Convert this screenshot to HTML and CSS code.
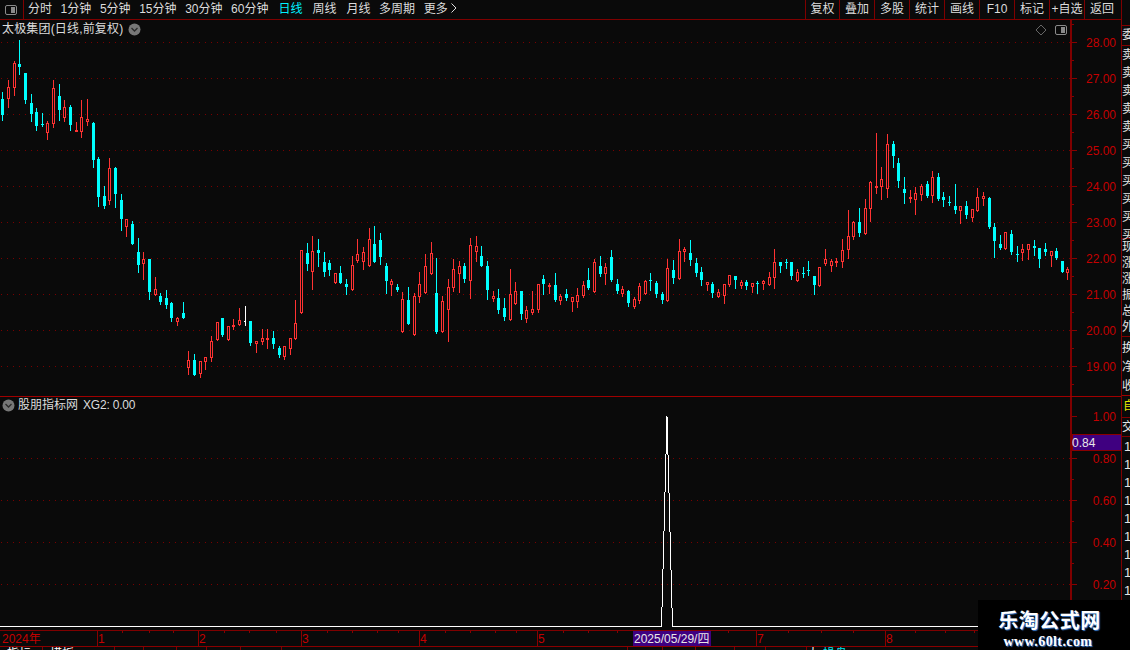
FILE: index.html
```html
<!DOCTYPE html>
<html lang="zh-CN">
<head>
<meta charset="utf-8">
<title>太极集团 日线</title>
<link rel="stylesheet" href="styles.css">
</head>
<body>
<div class="app">
  <div class="left">
    <header class="toolbar">
      <div class="tb-icon">
        <svg width="14" height="12" viewBox="0 0 14 12"><rect class="ic-box" x="1.5" y="1.5" width="11" height="9" rx="1.5"/><rect class="ic-fill" x="7" y="3" width="4" height="6"/></svg>
      </div>
      <nav class="periods">
        <span>分时</span><span>1分钟</span><span>5分钟</span><span>15分钟</span><span>30分钟</span><span>60分钟</span>
        <span class="wide active">日线</span><span class="wide">周线</span><span class="wide">月线</span><span>多周期</span><span>更多 <svg class="more" width="6" height="10" viewBox="0 0 6 10"><path d="M0.5 0.5L5 5L0.5 9.5"/></svg></span>
      </nav>
      <nav class="actions">
        <span>复权</span><span>叠加</span><span>多股</span><span>统计</span><span>画线</span><span>F10</span><span>标记</span><span>+自选</span><span>返回</span>
      </nav>
    </header>

    <section class="pane price">
      <div class="plot">
        <div class="title"><span class="name">太极集团(日线,前复权)</span>
          <svg class="chev" width="13" height="13" viewBox="0 0 13 13"><circle cx="6.5" cy="6.5" r="6"/><path d="M3.5 5L6.5 8L9.5 5"/></svg>
        </div>
        <div class="corner">
          <svg width="12" height="12" viewBox="0 0 12 12"><path class="ic-line" d="M6 1L11 6L6 11L1 6Z"/></svg>
          <svg width="14" height="12" viewBox="0 0 14 12"><rect class="ic-box" x="1.5" y="1.5" width="11" height="9" rx="1.5"/><rect class="ic-fill" x="7" y="3" width="4" height="6"/></svg>
        </div>
        <svg id="kline" class="chart" width="1070" height="376" viewBox="0 20 1070 376">
          <path class="grid" d="M1 42.5H1070M1 78.5H1070M1 114.5H1070M1 150.5H1070M1 186.5H1070M1 222.5H1070M1 258.5H1070M1 294.5H1070M1 330.5H1070M1 366.5H1070"/>
        </svg>
      </div>
      <div class="axis">
        <svg class="chart" width="49" height="376" viewBox="1072 20 49 376">
          <path class="tick" d="M1072 42.5h5M1072 78.5h5M1072 114.5h5M1072 150.5h5M1072 186.5h5M1072 222.5h5M1072 258.5h5M1072 294.5h5M1072 330.5h5M1072 366.5h5M1072 24.5h2M1072 60.5h2M1072 96.5h2M1072 132.5h2M1072 168.5h2M1072 204.5h2M1072 240.5h2M1072 276.5h2M1072 312.5h2M1072 348.5h2M1072 384.5h2"/>
          <text class="lbl" x="1116" y="47">28.00</text>
          <text class="lbl" x="1116" y="83">27.00</text>
          <text class="lbl" x="1116" y="119">26.00</text>
          <text class="lbl" x="1116" y="155">25.00</text>
          <text class="lbl" x="1116" y="191">24.00</text>
          <text class="lbl" x="1116" y="227">23.00</text>
          <text class="lbl" x="1116" y="263">22.00</text>
          <text class="lbl" x="1116" y="299">21.00</text>
          <text class="lbl" x="1116" y="335">20.00</text>
          <text class="lbl" x="1116" y="371">19.00</text>
        </svg>
      </div>
    </section>

    <section class="pane indicator">
      <div class="plot">
        <div class="title sub">
          <svg class="chev" width="13" height="13" viewBox="0 0 13 13"><circle cx="6.5" cy="6.5" r="6"/><path d="M3.5 5L6.5 8L9.5 5"/></svg>
          <span class="name-sub">股朋指标网</span><span class="xg">XG2: 0.00</span>
        </div>
        <svg class="chart" width="1070" height="233" viewBox="0 397 1070 233">
          <path class="grid" d="M1 458.5H1070M1 500.5H1070M1 542.5H1070M1 584.5H1070"/>
          <path class="signal" d="M0 626.5H661.5L667 416L672.5 626.5H1070"/>
        </svg>
      </div>
      <div class="axis">
        <svg class="chart" width="49" height="233" viewBox="1072 397 49 233">
          <path class="tick" d="M1072 416.5h5M1072 458.5h5M1072 500.5h5M1072 542.5h5M1072 584.5h5M1072 626.5h5M1072 437.5h2M1072 479.5h2M1072 521.5h2M1072 563.5h2M1072 605.5h2"/>
          <text class="lbl" x="1116" y="421">1.00</text>
          <text class="lbl" x="1116" y="463">0.80</text>
          <text class="lbl" x="1116" y="505">0.60</text>
          <text class="lbl" x="1116" y="547">0.40</text>
          <text class="lbl" x="1116" y="589">0.20</text>
          <rect class="cur" x="1072" y="434.5" width="49" height="16"/>
          <text class="curtxt" x="1072" y="447">0.84</text>
        </svg>
      </div>
    </section>

    <section class="timeaxis">
      <svg class="chart" width="1121" height="15" viewBox="0 631 1121 15">
        <path class="tick" d="M97.5 631V646M198.5 631V646M301.5 631V646M419.5 631V646M537.5 631V646M756.5 631V646M885.5 631V646"/>
        <path class="tick" d="M122.5 631v2M149.5 631v2M173.5 631v2M224.5 631v2M249.5 631v2M276.5 631v2M327.5 631v2M352.5 631v2M377.5 631v2M398.5 631v2M445.5 631v2M470.5 631v2M495.5 631v2M516.5 631v2M563.5 631v2M588.5 631v2M617.5 631v2M728.5 631v2M788.5 631v2M821.5 631v2M853.5 631v2M915.5 631v2M945.5 631v2M974.5 631v2"/>
        <text class="tl" x="2" y="643">2024年</text>
        <text class="tl" x="98" y="643">1</text>
        <text class="tl" x="199" y="643">2</text>
        <text class="tl" x="302" y="643">3</text>
        <text class="tl" x="420" y="643">4</text>
        <text class="tl" x="538" y="643">5</text>
        <text class="tl" x="757" y="643">7</text>
        <text class="tl" x="886" y="643">8</text>
        <rect class="daterect" x="633" y="631" width="78" height="15"/>
        <text class="dl" x="634" y="643">2025/05/29/四</text>
      </svg>
    </section>

    <footer class="tabs">
      <span>指标</span><span>模板</span><span></span><span></span><span></span><span></span><span></span><span></span><span></span><span></span><span></span><span></span><span></span><span></span><span class="split"><i>大</i><b>操盘</b></span>
    </footer>
  </div>

  <aside class="side">
    <div class="s-top">委</div>
    <div class="s-group g1"><div>卖</div><div>卖</div><div>卖</div><div>卖</div><div>卖</div><div>买</div><div>买</div><div>买</div><div>买</div><div>买</div><div>买</div></div>
    <div class="s-group g2"><div>现</div><div>涨</div><div>涨</div><div>振</div><div>总</div><div>外</div></div>
    <div class="s-group g3"><div>换</div><div>净</div><div>收</div></div>
    <div class="s-self">自</div>
    <div class="s-trade">交</div>
    <div class="s-nums"><div>1</div><div>1</div><div>1</div><div>1</div><div>1</div><div>1</div><div>1</div><div>1</div><div>1</div></div>
  </aside>

  <div class="watermark">
    <div class="wm-cn">乐淘公式网</div>
    <div class="wm-url">www.60lt.com</div>
  </div>
</div>
<script src="app.js"></script>
</body>
</html>
```

FILE: styles.css
```css
* { box-sizing: border-box; }
html, body { margin: 0; padding: 0; background: #0a0a0a; }
body {
  width: 1130px; height: 650px; overflow: hidden;
  font: 12px/14px "Liberation Sans", "Noto Sans CJK SC", sans-serif;
  color: #dcdcdc;
}
.app { position: relative; display: flex; width: 1130px; height: 650px; }
.left { width: 1122px; display: flex; flex-direction: column; border-right: 1px solid #7f0000; }
.chart { display: block; }

/* toolbar */
.toolbar { display: flex; height: 20px; border-bottom: 1px solid #7f0000; line-height: 19px; }
.tb-icon { width: 24px; border-right: 1px solid #7f0000; display: flex; align-items: center; padding-left: 4px; }
.ic-box { fill: none; stroke: #8a8a8a; }
.ic-fill { fill: #8a8a8a; }
.ic-line { fill: none; stroke: #666; }
.periods { display: flex; gap: 8.6px; padding-left: 4px; }
.periods .wide { margin-left: 1.4px; }
.active { color: #00f0ff; }
.more { fill: none; stroke: #dcdcdc; }
.actions { display: flex; margin-left: auto; }
.actions span { width: 35px; border-left: 1px solid #7f0000; text-align: center; }
.actions span:first-child { width: 34px; }
.actions span:last-child { width: 37px; padding-right: 2px; }

/* panes */
.pane { display: flex; border-bottom: 1px solid #a00000; }
.price { height: 377px; }
.indicator { height: 234px; border-bottom-color: #7f0000; }
.plot { position: relative; width: 1070px; }
.axis { width: 51px; border-left: 2px solid #7f0000; }
.title { position: absolute; left: 2px; top: 2px; display: flex; align-items: center; gap: 5px; line-height: 14px; white-space: nowrap; }
.name { letter-spacing: 0.17px; }
.title.sub { top: 1px; gap: 3px; left: 2px; }
.xg { margin-left: 2px; letter-spacing: -0.2px; }
.chev circle { fill: #777; }
.chev path { fill: none; stroke: #2a2a2a; stroke-width: 1.3; }
.corner { position: absolute; right: 2px; top: 4px; display: flex; align-items: center; gap: 7px; }
.grid { fill: none; stroke: #7a0000; stroke-dasharray: 1 5; shape-rendering: crispEdges; }
.tick { fill: none; stroke: #8a0000; shape-rendering: crispEdges; }
.lbl { fill: #c40000; font-size: 12px; text-anchor: end; }
.signal { fill: none; stroke: #fff; shape-rendering: crispEdges; }
.cur { fill: #3f0080; stroke: #8a0000; shape-rendering: crispEdges; }
.curtxt { fill: #e8e8e8; font-size: 12px; }

/* candles */
.up-body { fill: #0a0a0a; stroke: #ff3232; shape-rendering: crispEdges; }
.up-wick { fill: #ff3232; shape-rendering: crispEdges; }
.dn { fill: #00ffff; shape-rendering: crispEdges; }
.dj { fill: #ffffff; shape-rendering: crispEdges; }

/* time axis */
.timeaxis { height: 16px; border-bottom: 1px solid #8a0000; }
.tl { fill: #c40000; font-size: 12px; }
.daterect { fill: #3f0080; }
.dl { fill: #e8e8e8; font-size: 12px; }

/* bottom tabs */
.tabs {
  height: 3px; overflow: hidden; display: grid;
  grid-template-columns: 43px 30px 42px 29px 33px 30px 34px 41px 346px 35px 33px 39px 31px 41px 32px 32px;
  line-height: 14px;
}
.tabs span { border-right: 1px solid #7f0000; padding-left: 7px; white-space: nowrap; color: #fff; }
.tabs .split { padding-left: 0; }
.tabs i { font-style: normal; margin-right: 4px; }
.tabs b { font-weight: normal; color: #00e8f0; }

/* right strip */
.side { width: 8px; padding-top: 25px; overflow: hidden; line-height: 18px; white-space: nowrap; color: #e4e4e4; }
.s-top { height: 21px; border-top: 1px solid #7f0000; border-bottom: 1px solid #7f0000; line-height: 19px; }
.g1 { height: 193px; border-bottom: 1px solid #7f0000; }
.g2 { height: 98px; border-bottom: 1px solid #7f0000; line-height: 16px; }
.g3 { height: 59px; line-height: 19px; border-bottom: 1px solid #a00000; padding-top: 2px; }
.s-self { height: 22px; border-bottom: 1px solid #7f0000; color: #e6e600; line-height: 21px; padding-left: 1px; }
.s-trade { height: 19px; border-bottom: 1px solid #7f0000; }
.s-nums { padding: 1px 0 0 2px; font-size: 13px; }

/* watermark */
.watermark { position: absolute; left: 978px; top: 600px; width: 152px; height: 50px; background: #000; color: #fff; text-align: center; }
.wm-cn { margin: 8px 0 0 -9px; font: bold 20px/24px "Noto Sans CJK SC", sans-serif; letter-spacing: 0.5px; text-shadow: 1px 1px 1px #3a78c8; }
.wm-url { margin: 2px 0 0 -12px; font: bold 14px/15px "Liberation Serif", serif; letter-spacing: 0.4px; text-shadow: 1px 1px 1px #3a78c8; }
```

FILE: app.js
```javascript
var DATA = "c92,99,115,120 r80,87,99,107 r61,63,88,95 c40,64,67,74 c73,73,100,103 c94,103,114,121 c108,112,126,130 c113,124,125,126 r121,123,133,139 r80,88,124,127 c84,96,110,120 r100,107,118,121 c105,107,125,130 r122,130,131,131 r100,117,132,137 r99,119,122,125 c122,123,160,167 c157,159,197,206 c186,196,206,208 r158,168,201,204 c167,168,194,207 c194,200,219,230 r219,219,227,236 c221,224,244,244 c238,252,265,272 r252,259,264,279 c259,259,292,299 r277,289,295,295 c293,296,302,304 c290,298,305,308 c302,303,318,321 r317,318,322,325 c302,313,318,318 r351,360,368,374 c354,360,375,375 r361,361,374,377 r357,357,362,369 r336,341,358,361 r322,322,340,340 c318,318,335,336 r326,326,340,340 r319,325,327,329 r308,320,325,325 w306,321,322,325 c321,321,343,345 r341,341,344,352 r329,338,342,344 r329,338,340,348 c331,338,344,348 c346,348,355,357 r346,346,357,359 r338,338,349,354 r300,323,339,339 " +
"r250,250,313,313 c243,253,264,270 r236,251,272,289 c239,250,253,266 c252,262,272,276 c260,263,270,275 r273,273,283,283 c266,273,283,283 c279,284,287,294 r256,265,290,290 r239,254,261,262 r247,252,262,269 r228,239,266,266 c226,244,262,262 c233,240,257,264 c263,266,281,293 r279,281,285,295 c284,287,290,291 r292,299,332,332 c287,300,324,324 r293,296,335,335 r272,284,297,302 r254,266,293,293 r242,253,274,274 c258,293,332,333 r296,301,332,332 r279,287,310,341 r259,269,288,291 r261,266,274,292 c263,266,279,282 r238,245,281,298 r236,246,252,261 c246,256,266,266 c261,266,290,299 r291,296,299,301 c289,298,310,313 c298,308,317,320 r269,294,320,320 r282,291,304,304 c291,291,314,319 r306,310,319,322 r291,309,313,314 r284,284,310,312 c275,279,284,294 r283,285,287,293 c273,285,300,301 r294,296,301,304 c289,294,298,300 r297,297,302,311 r288,295,302,307 r281,285,296,297 c268,280,288,289 r259,262,292,292 " +
"c256,266,274,276 r263,267,274,284 c250,257,280,281 c279,284,291,293 r286,289,294,296 c290,291,303,306 r297,299,307,308 r283,286,301,303 r280,281,294,294 c273,280,281,290 c281,283,294,297 c292,294,300,303 r259,268,301,301 c260,270,278,283 r239,251,279,279 r247,249,252,261 c240,253,260,265 c258,263,273,276 c267,272,280,285 r282,282,285,290 c282,284,293,297 r289,292,297,297 r284,284,296,303 r275,275,285,286 c276,276,280,288 r280,282,286,288 c280,282,286,289 r283,283,287,292 c281,283,284,293 r280,281,284,289 r272,277,285,285 r249,262,278,288 c262,262,266,272 c259,262,263,268 c262,262,276,279 r269,272,281,281 c267,273,274,277 c261,270,271,275 c276,276,285,294 r267,267,286,286 r249,259,264,265 r259,261,266,271 r258,261,263,266 r239,250,262,267 " +
"r210,236,250,258 r221,222,237,239 c208,222,233,236 r199,208,234,234 r181,182,209,221 r133,186,188,193 r167,179,187,199 r134,144,189,197 c141,144,156,167 c158,163,181,187 c177,189,193,203 r190,197,199,202 r187,193,200,214 r184,186,195,200 c181,184,196,197 r171,177,196,202 c173,177,199,200 c192,197,200,206 c196,202,203,205 c184,206,210,213 r206,206,211,223 c201,206,215,218 r209,209,218,221 r188,197,211,211 r192,196,199,205 c197,198,227,228 c223,227,241,257 c235,244,248,249 r232,232,249,249 c230,234,252,254 c246,254,255,261 r244,249,253,260 r244,244,250,259 c240,246,248,255 c248,248,259,267 c243,249,252,255 r251,251,256,266 c248,251,258,259 c261,261,272,272 r267,269,273,279";

(function () {
  var svg = document.getElementById("kline");
  var NS = "http://www.w3.org/2000/svg";
  function rect(cls, x, y, w, h) {
    if (h <= 0) return;
    var r = document.createElementNS(NS, "rect");
    r.setAttribute("class", cls);
    r.setAttribute("x", x);
    r.setAttribute("y", y);
    r.setAttribute("width", w);
    r.setAttribute("height", h);
    svg.appendChild(r);
  }
  DATA.split(" ").forEach(function (s, i) {
    var kind = s.charAt(0);
    var v = s.slice(1).split(",").map(Number);
    var hi = v[0], top = v[1], bot = v[2], lo = v[3];
    var c = Math.round(2.4 + 5.635 * i);
    if (kind === "c") {
      rect("dn", c, hi, 1, lo - hi + 1);
      rect("dn", c - 1, top, 3, Math.max(bot - top, 1));
    } else if (kind === "w") {
      rect("dj", c, hi, 1, lo - hi + 1);
      rect("dj", c - 1, top, 2, 1);
    } else {
      rect("up-wick", c, hi, 1, lo - hi + 1);
      if (bot - top < 2) {
        rect("up-wick", c - 1, top, 3, 2);
      } else {
        rect("up-body", c - 0.5, top + 0.5, 2, bot - top - 1);
      }
    }
  });
})();
```
